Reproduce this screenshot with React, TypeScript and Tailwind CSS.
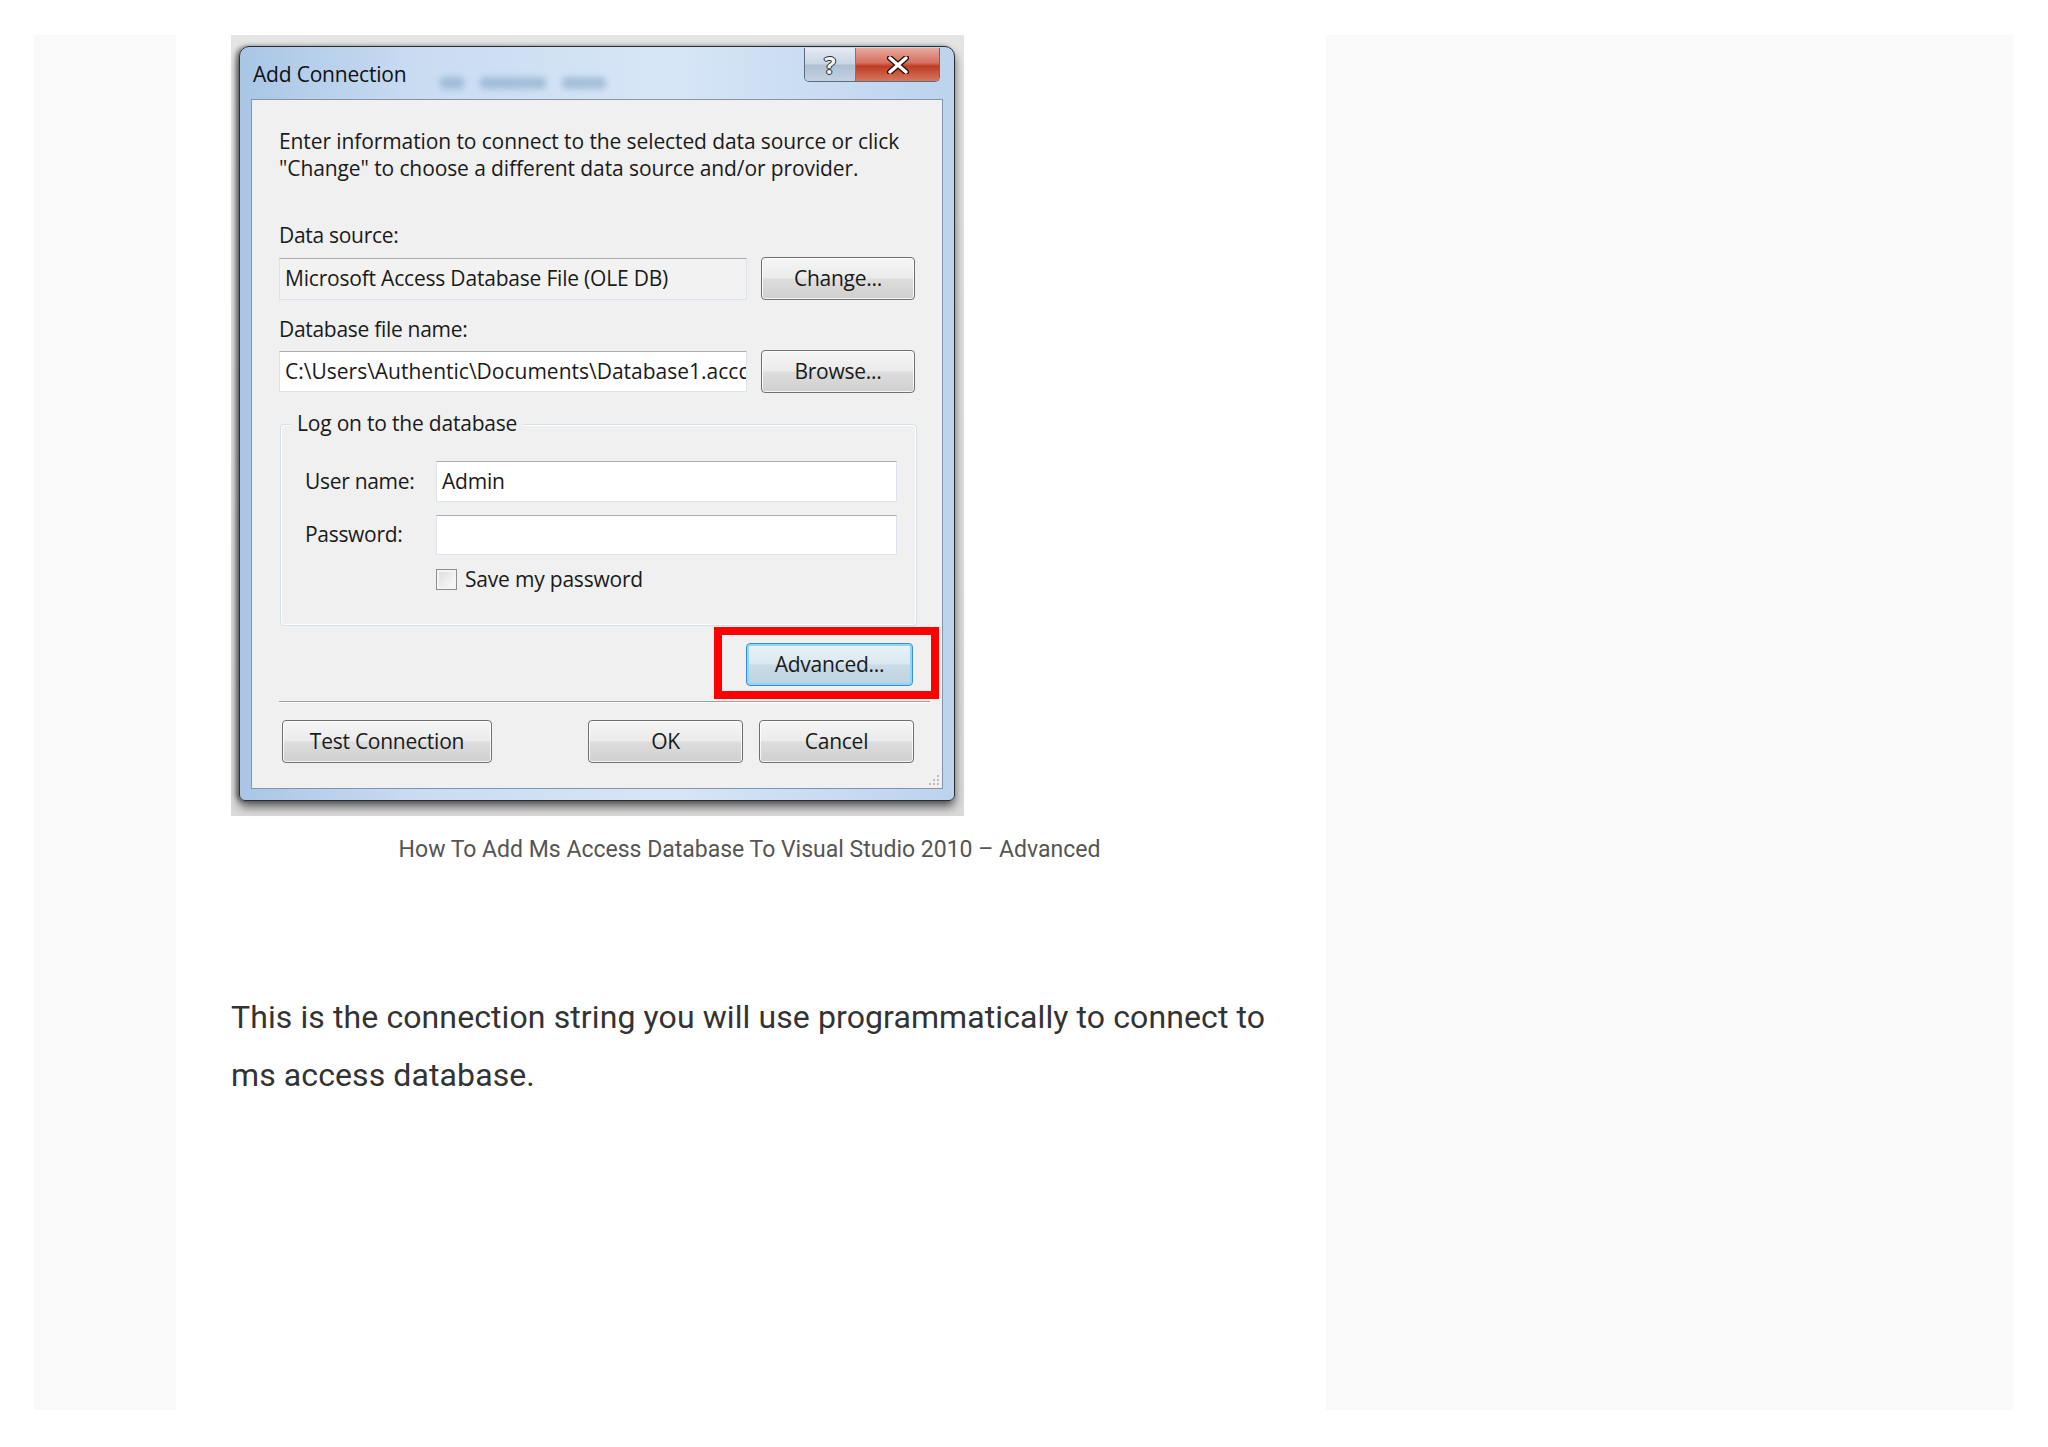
import React from 'react'

const dlgFont = { fontFamily: '"Open Sans", "Noto Sans", sans-serif' }

function WinButton({ label, className = '' }: { label: string; className?: string }) {
  return (
    <div
      className={`flex h-[43px] items-center justify-center rounded-[4px] border border-[#707070] bg-[linear-gradient(#f6f6f6_0%,#ebebeb_48%,#dddddd_52%,#cfcfcf_100%)] text-[21px] tracking-[-0.25px] text-[#1a1a1a] shadow-[inset_0_0_0_1px_rgba(255,255,255,0.8)] ${className}`}
    >
      {label}
    </div>
  )
}

function TextBox({ value, className = '' }: { value?: string; className?: string }) {
  return (
    <div
      className={`flex items-center overflow-hidden whitespace-nowrap border border-[#dde3ea] border-t-[#abadb3] pl-[5px] text-[21px] text-[#1a1a1a] ${className}`}
    >
      {value}
    </div>
  )
}

function AddConnectionDialog() {
  return (
    <div
      className="w-[733px] h-[781px] bg-[linear-gradient(#e4e4e4,#dadada)] pl-[8px] pt-[11px]"
      style={dlgFont}
    >
      <div className="flex h-[755px] w-[716px] flex-col rounded-t-[10px] rounded-b-[6px] border border-[#2e2e2e] bg-[linear-gradient(90deg,#a9c6e6_0%,#c9dcf2_25%,#d7e6f7_60%,#bcd3ee_100%)] shadow-[0_6px_10px_rgba(0,0,0,0.55),-3px_0_4px_rgba(0,0,0,0.4)]">
        {/* title bar */}
        <div className="relative flex h-[52px] shrink-0 items-start justify-between">
          <div className="mt-[12px] pl-[13px] text-[21px] tracking-[-0.2px] text-[#111]">Add Connection</div>
          <div className="absolute left-[200px] top-[30px] flex gap-[16px] opacity-30 blur-[3px]">
            <div className="h-[12px] w-[24px] rounded bg-[#3e6f9c]" />
            <div className="h-[12px] w-[66px] rounded bg-[#3e6f9c]" />
            <div className="h-[12px] w-[44px] rounded bg-[#3e6f9c]" />
          </div>
          <div className="mr-[14px] mt-[1px] flex overflow-hidden rounded-b-[5px] border border-t-0 border-[#5b6b7e]">
            <div className="flex h-[33px] w-[51px] items-center justify-center border-r border-[#6d7a8a] bg-[linear-gradient(#e4ebf3_0%,#c9d6e4_48%,#aebfd2_52%,#c2d2e2_100%)] text-[24px] font-bold leading-none text-[#f4f6f8] [text-shadow:0_0_1px_#1f2d3d,1px_0_0_#1f2d3d,-1px_0_0_#1f2d3d,0_1px_0_#1f2d3d,0_-1px_0_#1f2d3d]">
              ?
            </div>
            <div className="flex h-[33px] w-[83px] items-center justify-center bg-[linear-gradient(#e9a99e_0%,#d4705f_45%,#c03a24_55%,#d6785f_100%)]">
              <svg width="22" height="18" viewBox="0 0 22 18">
                <path d="M3 2 L19 16 M19 2 L3 16" stroke="#2a0c06" strokeWidth="6" strokeLinecap="round" />
                <path d="M3 2 L19 16 M19 2 L3 16" stroke="#ffffff" strokeWidth="3.4" strokeLinecap="round" />
              </svg>
            </div>
          </div>
        </div>

        {/* client area */}
        <div className="relative mx-[11px] h-[690px] border border-[#8595a8] bg-[#f0f0f0] px-[27px]">
          <p className="mt-[28px] text-[21px] leading-[27px] tracking-[-0.1px] text-[#1a1a1a]">
            Enter information to connect to the selected data source or click
            <br />
            "Change" to choose a different data source and/or provider.
          </p>

          <div className="mt-[40px] text-[21px] leading-[27px] tracking-[-0.3px] text-[#1a1a1a]">Data source:</div>
          <div className="mt-[8px] flex items-center gap-[14px]">
            <TextBox value="Microsoft Access Database File (OLE DB)" className="h-[42px] w-[468px] bg-[#f2f2f2] tracking-[-0.2px]" />
            <WinButton label="Change..." className="w-[154px]" />
          </div>

          <div className="mt-[16px] text-[21px] leading-[27px] tracking-[-0.3px] text-[#1a1a1a]">Database file name:</div>
          <div className="mt-[7px] flex items-center gap-[14px]">
            <TextBox value="C:\Users\Authentic\Documents\Database1.accdb" className="h-[41px] w-[468px] bg-white tracking-[0px]" />
            <WinButton label="Browse..." className="w-[154px]" />
          </div>

          {/* group box */}
          <div className="relative ml-[1px] mt-[31px] h-[202px] w-[637px] rounded-[4px] border border-[#d5dfe5] shadow-[inset_0_0_0_1px_#ffffff]">
            <div className="absolute left-[10px] top-[-15px] bg-[#f0f0f0] px-[6px] text-[21px] leading-[27px] tracking-[-0.2px] text-[#1a1a1a]">
              Log on to the database
            </div>
            <div className="mt-[36px] flex items-center pl-[24px]">
              <div className="w-[131px] text-[21px] tracking-[-0.3px] text-[#1a1a1a]">User name:</div>
              <TextBox value="Admin" className="h-[41px] w-[461px] bg-white tracking-[-0.2px]" />
            </div>
            <div className="mt-[13px] flex items-center pl-[24px]">
              <div className="w-[131px] text-[21px] tracking-[-0.3px] text-[#1a1a1a]">Password:</div>
              <TextBox className="h-[40px] w-[461px] bg-white" />
            </div>
            <div className="mt-[14px] flex items-center gap-[8px] pl-[155px]">
              <div className="h-[21px] w-[21px] border border-[#8e8f8f] bg-[linear-gradient(135deg,#dcdcdc,#fdfdfd)] shadow-[inset_0_0_0_2px_#f4f4f4]" />
              <div className="text-[21px] leading-[21px] tracking-[-0.2px] text-[#1a1a1a]">Save my password</div>
            </div>
          </div>

          {/* advanced row */}
          <div className="mt-[17px] flex justify-end pr-[2px]">
            <div className="relative">
              <div className="flex h-[43px] w-[167px] items-center justify-center rounded-[4px] border border-[#3c8ed4] bg-[linear-gradient(#eaf3f8_0%,#dbe8f0_48%,#c8dbe6_52%,#bcd3e1_100%)] text-[21px] tracking-[-0.25px] text-[#1a1a1a] shadow-[inset_0_0_0_2px_#8fd6f7]">
                Advanced...
              </div>
              <div className="absolute -left-[32px] -top-[16px] -right-[26px] -bottom-[13px] border-[8px] border-[#ff0000]" />
            </div>
          </div>

          <div className="-mr-[15px] mt-[15px] h-[2px] border-t border-[#a0a0a0] border-b border-b-white" />

          <div className="mt-[17px] flex items-center">
            <WinButton label="Test Connection" className="ml-[3px] w-[210px]" />
            <WinButton label="OK" className="ml-auto w-[155px]" />
            <WinButton label="Cancel" className="ml-[16px] mr-[1px] w-[155px]" />
          </div>

          <div className="absolute bottom-[3px] right-[3px] grid grid-cols-3 gap-[2px] opacity-60">
            <span />
            <span />
            <span className="h-[2px] w-[2px] bg-[#9a9a9a]" />
            <span />
            <span className="h-[2px] w-[2px] bg-[#9a9a9a]" />
            <span className="h-[2px] w-[2px] bg-[#9a9a9a]" />
            <span className="h-[2px] w-[2px] bg-[#9a9a9a]" />
            <span className="h-[2px] w-[2px] bg-[#9a9a9a]" />
            <span className="h-[2px] w-[2px] bg-[#9a9a9a]" />
          </div>
        </div>
      </div>
    </div>
  )
}

export default function App() {
  return (
    <div className="flex min-h-[1447px] bg-white pt-[35px]" style={{ fontFamily: 'Roboto, "Liberation Sans", sans-serif' }}>
      <div className="ml-[34px] h-[1375px] w-[142px] bg-[#f9f9f9]" />

      <main className="w-[1150px] pl-[55px] pr-[58px]">
        <figure>
          <AddConnectionDialog />
          <figcaption className="mt-[19px] text-center text-[23px] leading-[30px] text-[#555555]">
            How To Add Ms Access Database To Visual Studio 2010 – Advanced
          </figcaption>
        </figure>

        <p className="mt-[123px] text-[32px] leading-[58px] tracking-[0.1px] text-[#333333]">
          This is the connection string you will use programmatically to connect to ms access database.
        </p>
      </main>

      <aside className="h-[1375px] w-[687px] bg-[#f9f9f9]" />
    </div>
  )
}
